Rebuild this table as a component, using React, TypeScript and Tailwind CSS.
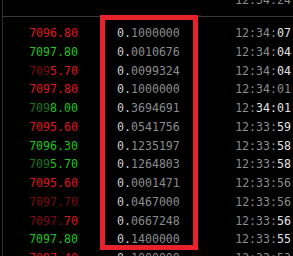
const up = 'text-[#1ec51e]';
const upDim = 'text-[#16781a]';
const down = 'text-[#e0161b]';
const downDim = 'text-[#7e0c0e]';

type Trade = { price: string; dim: number; side: 'up' | 'down'; size: string; time: string; lit: number };

const trades: Trade[] = [
    { price: '7096.80', dim: 0, side: 'down', size: '0.1000000', time: '12:34:07', lit: 2 },
    { price: '7097.80', dim: 0, side: 'up', size: '0.0010676', time: '12:34:04', lit: 2 },
    { price: '7095.70', dim: 3, side: 'down', size: '0.0099324', time: '12:34:04', lit: 2 },
    { price: '7097.80', dim: 0, side: 'down', size: '0.1000000', time: '12:34:01', lit: 0 },
    { price: '7098.00', dim: 3, side: 'up', size: '0.3694691', time: '12:34:01', lit: 5 },
    { price: '7095.60', dim: 0, side: 'down', size: '0.0541756', time: '12:33:59', lit: 2 },
    { price: '7096.30', dim: 0, side: 'up', size: '0.1235197', time: '12:33:58', lit: 2 },
    { price: '7095.70', dim: 3, side: 'up', size: '0.1264803', time: '12:33:58', lit: 2 },
    { price: '7095.60', dim: 0, side: 'down', size: '0.0001471', time: '12:33:56', lit: 0 },
    { price: '7097.70', dim: 7, side: 'down', size: '0.0467000', time: '12:33:56', lit: 0 },
    { price: '7097.70', dim: 5, side: 'down', size: '0.0667248', time: '12:33:56', lit: 2 },
    { price: '7097.80', dim: 0, side: 'up', size: '0.1400000', time: '12:33:55', lit: 2 },
    { price: '7097.40', dim: 0, side: 'down', size: '0.1000000', time: '12:33:53', lit: 0 },
];

const Row = ({ t }: { t: Trade }) => {
    const bright = t.side === 'up' ? up : down;
    const faded = t.side === 'up' ? upDim : downDim;
    const cut = t.time.length - t.lit;
    return (
        <div className="flex items-center h-[18.75px] leading-[18.75px]">
            <div className="w-[75px] text-right">
                <span className={faded}>{t.price.slice(0, t.dim)}</span>
                <span className={bright}>{t.price.slice(t.dim)}</span>
            </div>
            <div className="ml-[39px] w-[63px]">
                <span className="text-[#c9ccd0]">{t.size.slice(0, 2)}</span>
                <span className="text-[#8a8c8f]">{t.size.slice(2)}</span>
            </div>
            <div className="ml-auto pr-[2px] text-right">
                <span className="text-[#8c8c8c]">{t.time.slice(0, cut)}</span>
                <span className="text-[#e2e2e2]">{t.time.slice(cut)}</span>
            </div>
        </div>
    );
};

const App = () => {
    return (
        <div className="relative w-[293px] h-[256px] overflow-hidden bg-black font-['DejaVu_Sans_Mono',monospace] text-[11.6px]">
            <div className="ml-[2px] h-full border-l border-[#2e2e2e]">
                <div className="h-[17px] overflow-hidden border-b border-[#3a3a3a]">
                    <div className="-mt-[9px] flex h-[19px] leading-[19px] justify-end pr-[2px] text-[#8c8c8c]">
                        12:34:24
                    </div>
                </div>
                <div className="pt-[7px]">
                    {trades.map((t, i) => (
                        <Row key={i} t={t} />
                    ))}
                </div>
            </div>
            <div className="absolute left-[100px] top-[15px] w-[98px] h-[235px] border-[5px] border-[#e8222b] pointer-events-none" />
        </div>
    );
};

export default App;
